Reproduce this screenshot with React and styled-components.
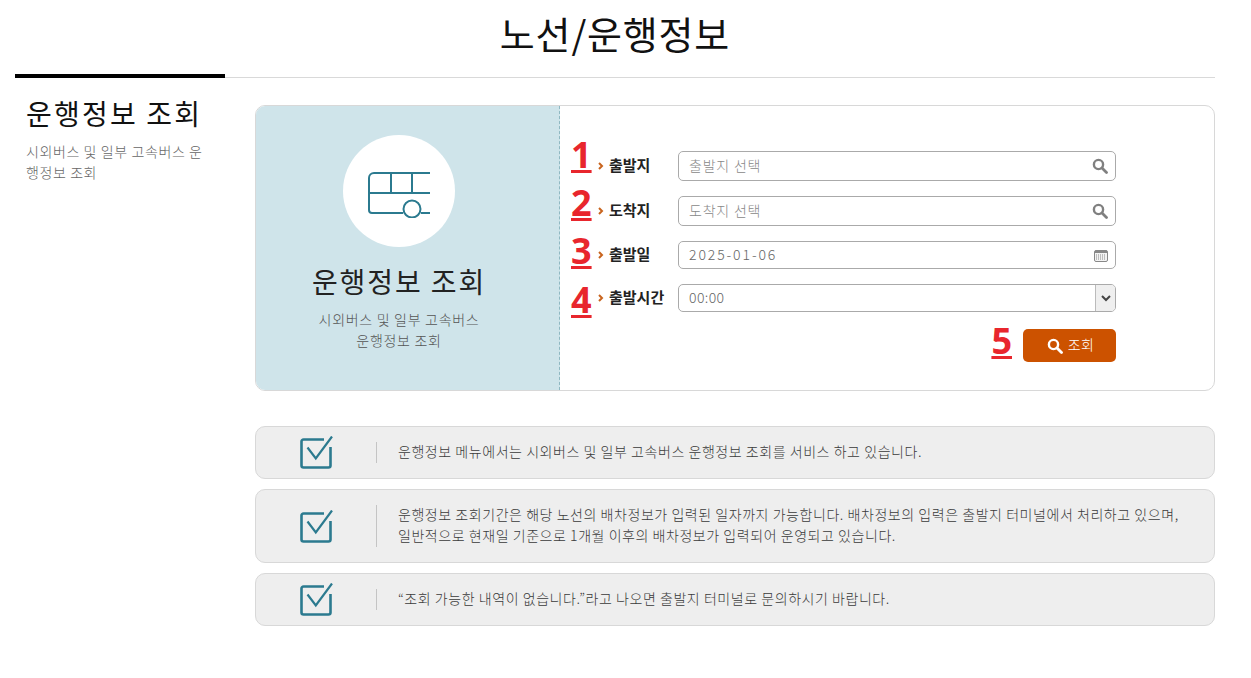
import React from "react";
import styled, { createGlobalStyle } from "styled-components";

const Global = createGlobalStyle`
  html, body { margin: 0; padding: 0; background: #fff; }
  body { font-family: "Noto Sans CJK KR", "Noto Sans", sans-serif; color: #222; }
  * { box-sizing: border-box; }
`;

const Page = styled.div`
  width: 1251px;
  height: 678px;
  padding: 0 36px 0 15px;
  overflow: hidden;
`;
const Title = styled.h1`
  margin: 0;
  height: 74px;
  padding-top: 8px;
  text-align: center;
  font-size: 38px;
  line-height: 50px;
  letter-spacing: 0.8px;
  font-weight: 400;
  color: #111;
`;
const Rule = styled.div`
  display: flex;
  align-items: flex-end;
  height: 4px;
`;
const RuleStrong = styled.div`
  width: 210px;
  height: 4px;
  background: #000;
`;
const RuleThin = styled.div`
  flex: 1;
  height: 1px;
  background: #d9d9d9;
`;
const Body = styled.div`
  display: flex;
  padding-top: 16px;
`;
const Side = styled.aside`
  width: 240px;
  flex: none;
  padding: 0 49px 0 11px;
`;
const SideTitle = styled.h2`
  margin: 0 0 9px;
  font-size: 28px;
  line-height: 38px;
  letter-spacing: 2.2px;
  font-weight: 400;
  color: #111;
  white-space: nowrap;
`;
const SideText = styled.p`
  margin: 0;
  font-size: 14px;
  line-height: 21px;
  letter-spacing: 0.6px;
  font-weight: 300;
  color: #666;
  word-break: break-all;
`;
const Main = styled.main`
  flex: 1;
  min-width: 0;
  padding-top: 11px;
`;
const Panel = styled.section`
  display: flex;
  height: 286px;
  border: 1px solid #d8d8d8;
  border-radius: 10px;
  overflow: hidden;
`;
const Hero = styled.div`
  width: 304px;
  flex: none;
  display: flex;
  flex-direction: column;
  align-items: center;
  padding: 29px 17px 0 0;
  background: #cfe4ea;
  border-right: 1px dashed #8fb8c2;
`;
const Circle = styled.div`
  width: 112px;
  height: 112px;
  border-radius: 50%;
  background: #fff;
  display: flex;
  align-items: center;
  justify-content: center;
  padding-top: 8px;
`;
const HeroTitle = styled.h3`
  margin: 14px 0 8px;
  font-size: 28px;
  line-height: 40px;
  letter-spacing: 1.9px;
  font-weight: 400;
  color: #222;
`;
const HeroText = styled.p`
  margin: 0;
  text-align: center;
  font-size: 14px;
  line-height: 21px;
  letter-spacing: 0.7px;
  font-weight: 300;
  color: #555;
`;
const Form = styled.form`
  flex: 1;
  padding: 45px 98px 0 11px;
`;
const Row = styled.div`
  display: flex;
  align-items: center;
  height: ${p => p.$h}px;
  margin-bottom: ${p => p.$gap}px;
`;
const Num = styled.span`
  font-family: "Open Sans", "Noto Sans", sans-serif;
  font-size: 36px;
  line-height: 36px;
  font-weight: 700;
  color: #e8262d;
  text-decoration: underline;
  text-decoration-thickness: 3px;
  text-underline-offset: 2px;
`;
const RowNum = styled(Num)`
  width: 27px;
  flex: none;
  margin-top: -22px;
  transform: translateY(${p => p.$shift}px);
`;
const Arrow = styled.svg`
  width: 6px;
  height: 8px;
  flex: none;
  margin-right: 5px;
`;
const Label = styled.label`
  width: 69px;
  flex: none;
  margin-bottom: 3px;
  font-size: 15px;
  font-weight: 700;
  color: #222;
  white-space: nowrap;
`;
const Field = styled.div`
  flex: 1;
  height: 100%;
  display: flex;
  align-items: center;
  justify-content: space-between;
  padding-left: 10px;
  padding-right: ${p => (p.$select ? 0 : 7)}px;
  border: 1px solid #aaa;
  border-radius: 5px;
  overflow: hidden;
`;
const FieldText = styled.span`
  margin-bottom: 2px;
  font-size: 14px;
  font-weight: 300;
  letter-spacing: ${p => p.$spacing}px;
  color: ${p => (p.$ph ? "#888" : "#666")};
`;
const Caret = styled.div`
  width: 20px;
  height: 100%;
  display: flex;
  align-items: center;
  justify-content: center;
  background: #efefef;
  border-left: 1px solid #bbb;
`;
const Actions = styled.div`
  display: flex;
  justify-content: flex-end;
  align-items: center;
  gap: 11px;
  margin-top: 17px;
`;
const ActionNum = styled(Num)`
  margin-top: -10px;
`;
const Btn = styled.button`
  width: 93px;
  height: 33px;
  padding: 0 0 0 2px;
  border: 0;
  border-radius: 5px;
  background: #cc5200;
  color: #fff;
  font-family: inherit;
  display: flex;
  align-items: center;
  justify-content: center;
  gap: 5px;
`;
const BtnText = styled.span`
  margin-bottom: 3px;
  font-size: 14px;
  font-weight: 300;
  letter-spacing: 0.3px;
`;
const Notices = styled.div`
  display: flex;
  flex-direction: column;
  gap: 10px;
  margin-top: 35px;
`;
const Notice = styled.div`
  display: flex;
  align-items: center;
  height: ${p => p.$h}px;
  background: #eee;
  border: 1px solid #d8d8d8;
  border-radius: 10px;
`;
const IconCell = styled.div`
  width: 120px;
  flex: none;
  display: flex;
  justify-content: center;
  padding-left: 2px;
`;
const Divider = styled.div`
  width: 1px;
  height: ${p => p.$h}px;
  flex: none;
  background: #c4c4c4;
`;
const NoticeText = styled.p`
  margin: 0 0 2px 21px;
  font-size: 14px;
  line-height: 21px;
  letter-spacing: 0.55px;
  font-weight: 300;
  color: #3a3a3a;
  white-space: nowrap;
`;

const Search = ({ color = "#808080" }) => (
  <svg width="16" height="16" viewBox="0 0 16 16" fill="none" aria-hidden="true">
    <circle cx="6.5" cy="6.5" r="4.6" stroke={color} strokeWidth="2.4" />
    <path d="M10 10l4.5 4.5" stroke={color} strokeWidth="2.8" strokeLinecap="round" />
  </svg>
);
const Calendar = () => (
  <svg width="14" height="13" viewBox="0 0 14 13" fill="none" aria-hidden="true">
    <rect x="0.5" y="1.5" width="13" height="11" rx="1.5" stroke="#888" fill="#f3f3f3" />
    <path d="M1 1.5h12V4H1z" fill="#888" />
    <path d="M2 6h10M2 8h10M2 10h10" stroke="#888" strokeDasharray="1 1" />
  </svg>
);
const Bus = () => (
  <svg width="62" height="46" viewBox="0 0 62 46" fill="none" stroke="#2b7a8f" strokeWidth="2" aria-hidden="true">
    <path d="M62 1H6a5 5 0 0 0-5 5v32a3 3 0 0 0 3 3h31" />
    <path d="M1 21h61M23 1v20M44 1v20" />
    <circle cx="44" cy="37" r="8.5" />
    <path d="M53 41h9" />
  </svg>
);
const Check = () => (
  <svg width="34" height="33" viewBox="0 0 34 33" fill="none" stroke="#2b7a8f" aria-hidden="true">
    <path d="M24 3.5H3.5a2 2 0 0 0-2 2v24a2 2 0 0 0 2 2h25a2 2 0 0 0 2-2V11" strokeWidth="2.6" />
    <path d="M7.5 11.5l8.3 11L32 0.5" strokeWidth="2.2" />
  </svg>
);
const Chevron = () => (
  <Arrow viewBox="0 0 6 8" aria-hidden="true">
    <path d="M1 1l3 3-3 3" fill="none" stroke="#c8641e" strokeWidth="2" />
  </Arrow>
);

export default function App() {
  return (
    <Page>
      <Global />
      <Title>노선/운행정보</Title>
      <Rule><RuleStrong /><RuleThin /></Rule>
      <Body>
        <Side>
          <SideTitle>운행정보 조회</SideTitle>
          <SideText>시외버스 및 일부 고속버스 운행정보 조회</SideText>
        </Side>
        <Main>
          <Panel>
            <Hero>
              <Circle><Bus /></Circle>
              <HeroTitle>운행정보 조회</HeroTitle>
              <HeroText>시외버스 및 일부 고속버스<br />운행정보 조회</HeroText>
            </Hero>
            <Form>
              <Row $h={30} $gap={15}>
                <RowNum $shift={0}>1</RowNum><Chevron /><Label>출발지</Label>
                <Field><FieldText $ph $spacing={0.8}>출발지 선택</FieldText><Search /></Field>
              </Row>
              <Row $h={30} $gap={15}>
                <RowNum $shift={3}>2</RowNum><Chevron /><Label>도착지</Label>
                <Field><FieldText $ph $spacing={0.8}>도착지 선택</FieldText><Search /></Field>
              </Row>
              <Row $h={28} $gap={15}>
                <RowNum $shift={7}>3</RowNum><Chevron /><Label>출발일</Label>
                <Field><FieldText $spacing={1.9}>2025-01-06</FieldText><Calendar /></Field>
              </Row>
              <Row $h={28} $gap={0}>
                <RowNum $shift={13}>4</RowNum><Chevron /><Label>출발시간</Label>
                <Field $select><FieldText $spacing={0.4}>00:00</FieldText>
                  <Caret>
                    <svg width="10" height="7" viewBox="0 0 10 7" fill="none" aria-hidden="true">
                      <path d="M1 1l4 4 4-4" stroke="#444" strokeWidth="2" />
                    </svg>
                  </Caret>
                </Field>
              </Row>
              <Actions>
                <ActionNum>5</ActionNum>
                <Btn type="button"><Search color="#fff" /><BtnText>조회</BtnText></Btn>
              </Actions>
            </Form>
          </Panel>
          <Notices>
            <Notice $h={53}>
              <IconCell><Check /></IconCell>
              <Divider $h={21} />
              <NoticeText>운행정보 메뉴에서는 시외버스 및 일부 고속버스 운행정보 조회를 서비스 하고 있습니다.</NoticeText>
            </Notice>
            <Notice $h={74}>
              <IconCell><Check /></IconCell>
              <Divider $h={42} />
              <NoticeText>
                운행정보 조회기간은 해당 노선의 배차정보가 입력된 일자까지 가능합니다. 배차정보의 입력은 출발지 터미널에서 처리하고 있으며,<br />
                일반적으로 현재일 기준으로 1개월 이후의 배차정보가 입력되어 운영되고 있습니다.
              </NoticeText>
            </Notice>
            <Notice $h={53}>
              <IconCell><Check /></IconCell>
              <Divider $h={21} />
              <NoticeText>“조회 가능한 내역이 없습니다.”라고 나오면 출발지 터미널로 문의하시기 바랍니다.</NoticeText>
            </Notice>
          </Notices>
        </Main>
      </Body>
    </Page>
  );
}
